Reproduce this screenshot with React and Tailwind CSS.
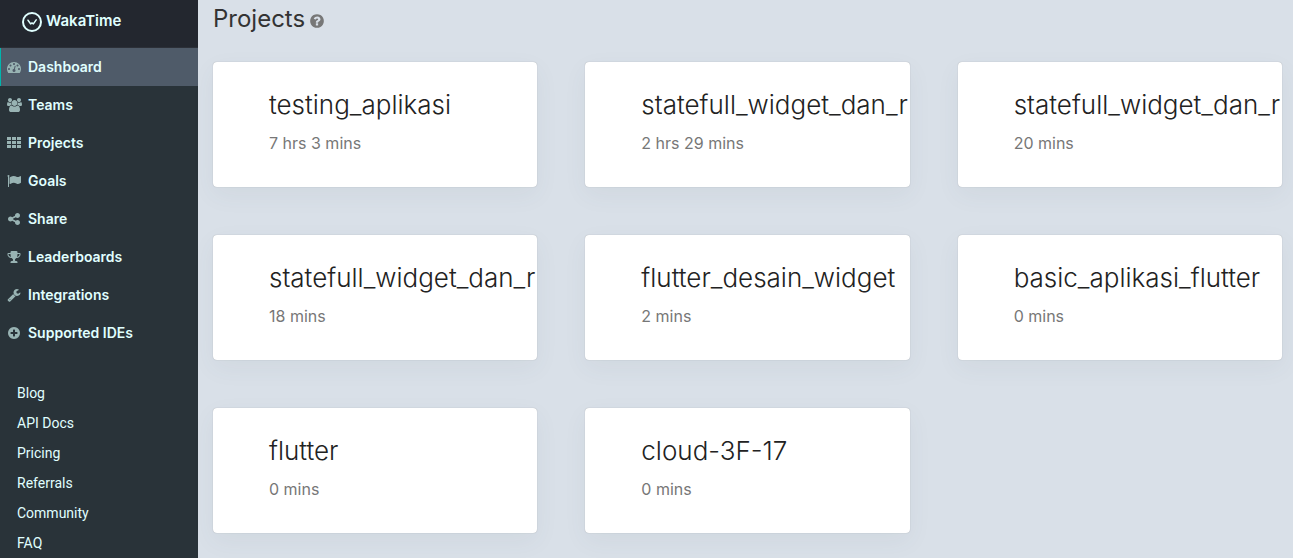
const DISC =
  'm384 192q0 209-103 385.5t-279.5 279.5-385.5 103-385.5-103-279.5-279.5-103-385.5 103-385.5 279.5-279.5 385.5-103 385.5 103 279.5 279.5 103 385.5z';

const PATHS = {
  dashboard:
    'M384 1152q0-53-37.5-90.5t-90.5-37.5-90.5 37.5-37.5 90.5 37.5 90.5 90.5 37.5 90.5-37.5 37.5-90.5zm192-448q0-53-37.5-90.5t-90.5-37.5-90.5 37.5-37.5 90.5 37.5 90.5 90.5 37.5 90.5-37.5 37.5-90.5zm428 481l101-382q6-26-7.5-48.5t-38.5-29.5-48 6.5-30 39.5l-101 382q-60 5-107 43.5t-63 98.5q-20 77 20 146t117 89 146-20 89-117q16-60-6-117t-72-91zm660-33q0-53-37.5-90.5t-90.5-37.5-90.5 37.5-37.5 90.5 37.5 90.5 90.5 37.5 90.5-37.5 37.5-90.5zm-640-640q0-53-37.5-90.5t-90.5-37.5-90.5 37.5-37.5 90.5 37.5 90.5 90.5 37.5 90.5-37.5 37.5-90.5zm448 192q0-53-37.5-90.5t-90.5-37.5-90.5 37.5-37.5 90.5 37.5 90.5 90.5 37.5 90.5-37.5 37.5-90.5zm320 448q0 261-141 483-19 29-54 29h-1402q-35 0-54-29-141-221-141-483 0-182 71-348t191-286 286-191 348-71 348 71 286 191 191 286 71 348z',
  teams:
    'M529 896q-162 5-265 128h-134q-82 0-138-40.5t-56-118.5q0-353 124-353 6 0 43.5 21t97.5 42.5 119 21.5q67 0 133-23-5 37-5 66 0 143 81 256zm1071 637q0 120-73 189.5t-194 69.5h-874q-121 0-194-69.5t-73-189.5q0-53 3.5-103.5t14-109 26.5-108.5 43-97.5 62-81 85.5-53.5 111.5-20q10 0 43 21.5t73 48 107 48 135 21.5 135-21.5 107-48 73-48 43-21.5q61 0 111.5 20t85.5 53.5 62 81 43 97.5 26.5 108.5 14 109 3.5 103.5zm-1024-1277q0 106-75 181t-181 75-181-75-75-181 75-181 181-75 181 75 75 181zm704 384q0 159-112.5 271.5t-271.5 112.5-271.5-112.5-112.5-271.5 112.5-271.5 271.5-112.5 271.5 112.5 112.5 271.5zm576 225q0 78-56 118.5t-138 40.5h-134q-103-123-265-128 81-117 81-256 0-29-5-66 66 23 133 23 59 0 119-21.5t97.5-42.5 43.5-21q124 0 124 353zm-128-609q0 106-75 181t-181 75-181-75-75-181 75-181 181-75 181 75 75 181z',
  projects:
    'M0 128h512v384h-512zM640 128h512v384h-512zM1280 128h512v384h-512zM0 640h512v384h-512zM640 640h512v384h-512zM1280 640h512v384h-512zM0 1152h512v384h-512zM640 1152h512v384h-512zM1280 1152h512v384h-512z',
  goals:
    'M320 256q0 72-64 110v1266q0 13-9.5 22.5t-22.5 9.5h-64q-13 0-22.5-9.5t-9.5-22.5v-1266q-64-38-64-110 0-53 37.5-90.5t90.5-37.5 90.5 37.5 37.5 90.5zm1472 64v763q0 25-12.5 38.5t-39.5 27.5q-215 116-369 116-61 0-123.5-22t-108.5-48-115.5-48-142.5-22q-192 0-464 146-17 9-33 9-26 0-45-19t-19-45v-742q0-32 31-55 21-14 79-43 236-120 421-120 107 0 200 29t219 88q38 19 88 19 54 0 117.5-21t110-47 88-47 54.5-21q26 0 45 19t19 45z',
  share:
    'M1344 1024q133 0 226.5 93.5t93.5 226.5-93.5 226.5-226.5 93.5-226.5-93.5-93.5-226.5q0-12 2-34l-360-180q-92 86-218 86-133 0-226.5-93.5t-93.5-226.5 93.5-226.5 226.5-93.5q126 0 218 86l360-180q-2-22-2-34 0-133 93.5-226.5t226.5-93.5 226.5 93.5 93.5 226.5-93.5 226.5-226.5 93.5q-126 0-218-86l-360 180q2 22 2 34t-2 34l360 180q92-86 218-86z',
  leaderboards:
    'M522 883q-74-162-74-371h-256v96q0 78 94.5 162t235.5 113zm1078-275v-96h-256q0 209-74 371 141-29 235.5-113t94.5-162zm128-128v128q0 71-41.5 143t-112 130-173 97.5-215.5 44.5q-42 54-95 95-38 34-52.5 72.5t-14.5 89.5q0 54 30.5 91t97.5 37q75 0 133.5 45.5t58.5 114.5v64q0 14-9 23t-23 9h-832q-14 0-23-9t-9-23v-64q0-69 58.5-114.5t133.5-45.5q67 0 97.5-37t30.5-91q0-51-14.5-89.5t-52.5-72.5q-53-41-95-95-113-5-215.5-44.5t-173-97.5-112-130-41.5-143v-128q0-40 28-68t68-28h288v-96q0-66 47-113t113-47h576q66 0 113 47t47 113v96h288q40 0 68 28t28 68z',
  integrations:
    'M448 1472q0-26-19-45t-45-19-45 19-19 45 19 45 45 19 45-19 19-45zm644-420l-682 682q-37 37-90 37-52 0-91-37l-106-108q-38-36-38-90 0-53 38-91l681-681q39 98 114.5 173.5t173.5 114.5zm634-435q0 39-23 106-47 134-164.5 217.5t-258.5 83.5q-185 0-316.5-131.5t-131.5-316.5 131.5-316.5 316.5-131.5q58 0 121.5 16.5t107.5 46.5q16 11 16 28t-16 28l-293 169v224l193 107q5-3 79-48.5t135.5-81 70.5-35.5q15 0 23.5 10t8.5 25z',
  ides:
    'M1344 960v-128q0-26-19-45t-45-19h-256v-256q0-26-19-45t-45-19h-128q-26 0-45 19t-19 45v256h-256q-26 0-45 19t-19 45v128q0 26 19 45t45 19h256v256q0 26 19 45t45 19h128q26 0 45-19t19-45v-256h256q26 0 45-19t19-45zm320-64q0 209-103 385.5t-279.5 279.5-385.5 103-385.5-103-279.5-279.5-103-385.5 103-385.5 279.5-279.5 385.5-103 385.5 103 279.5 279.5 103 385.5z',
  help:
    'M1024 1376v-192q0-14-9-23t-23-9h-192q-14 0-23 9t-9 23v192q0 14 9 23t23 9h192q14 0 23-9t9-23zm256-672q0-88-55.5-163t-138.5-116-170-41q-243 0-371 213-15 24 8 42l132 100q7 6 19 6 16 0 25-12 53-68 86-92 34-24 86-24 48 0 85.5 26t37.5 59q0 38-20 61t-68 45q-63 28-115.5 86.5t-52.5 125.5v36q0 14 9 23t23 9h192q14 0 23-9t9-23q0-19 21.5-49.5t54.5-49.5q32-18 49-28.5t46-35 44.5-48 28-60.5 12.5-81z' +
    DISC,
};

const NAV = [
  ['dashboard', 'Dashboard'],
  ['teams', 'Teams'],
  ['projects', 'Projects'],
  ['goals', 'Goals'],
  ['share', 'Share'],
  ['leaderboards', 'Leaderboards'],
  ['integrations', 'Integrations'],
  ['ides', 'Supported IDEs'],
];

const LINKS = ['Blog', 'API Docs', 'Pricing', 'Referrals', 'Community', 'FAQ'];

const PROJECTS = [
  ['testing_aplikasi', '7 hrs 3 mins'],
  ['statefull_widget_dan_r', '2 hrs 29 mins'],
  ['statefull_widget_dan_r', '20 mins'],
  ['statefull_widget_dan_r', '18 mins'],
  ['flutter_desain_widget', '2 mins'],
  ['basic_aplikasi_flutter', '0 mins'],
  ['flutter', '0 mins'],
  ['cloud-3F-17', '0 mins'],
];

function Icon({ name, className }) {
  return (
    <svg
      viewBox={name === 'teams' ? '-64 0 1920 1792' : '0 0 1792 1792'}
      fill="currentColor"
      aria-hidden="true"
      className={className}
    >
      <path d={PATHS[name]} />
    </svg>
  );
}

function Sidebar() {
  return (
    <aside className="w-[198px] shrink-0 bg-[#293339] text-[#e0ffff]">
      <a href="#" className="flex h-12 items-center gap-1 border-b border-[#2c3038] bg-[#23272f] pb-1 pl-[22px] font-semibold">
        <svg viewBox="0 0 20 20" fill="none" stroke="currentColor" aria-hidden="true" className="size-5">
          <circle cx="10" cy="10" r="9" strokeWidth="2" />
          <path d="M6 8.2 8.6 11.9 10 11 11.4 11.9 14.2 7.8" strokeWidth="1.5" strokeLinecap="round" strokeLinejoin="round" />
        </svg>
        <span className="text-[15px]">WakaTime</span>
      </a>
      <nav>
        {NAV.map(([icon, label], i) => (
          <a
            key={icon}
            href="#"
            className={
              i === 0
                ? 'flex h-[38px] items-center gap-1.5 border-l border-[#00b5ad] bg-[#4f5b69] pl-[5px] text-sm font-semibold'
                : 'flex h-[38px] items-center gap-1.5 border-l border-transparent pl-[5px] text-sm font-semibold'
            }
          >
            <span className="flex w-4 justify-center text-[#98b3b3]">
              <Icon name={icon} className={icon === 'teams' ? 'h-3.5 w-[15px]' : 'size-3.5'} />
            </span>
            {label}
          </a>
        ))}
      </nav>
      <nav className="mt-[26px] pl-[17px] font-['Roboto',sans-serif]">
        {LINKS.map((label) => (
          <a key={label} href="#" className="flex h-[30px] items-center text-sm">
            {label}
          </a>
        ))}
      </nav>
    </aside>
  );
}

export default function App() {
  return (
    <div className="flex h-screen overflow-hidden bg-[#d9e0e8] font-['Inter','Roboto',sans-serif]">
      <Sidebar />
      <main className="min-w-0 flex-1 pr-[11px] pl-[15px]">
        <div className="flex h-[62px] items-start gap-1 pt-1">
          <h1 className="text-2xl leading-[30px] text-[#333]">Projects</h1>
          <button type="button" aria-label="About projects" className="mt-[9px] text-[#777]">
            <Icon name="help" className="size-4" />
          </button>
        </div>
        <div className="grid grid-cols-3 gap-12">
          {PROJECTS.map(([name, time]) => (
            <a
              key={time + name}
              href="#"
              className="block h-[125px] overflow-hidden rounded bg-white pt-7 pl-14 shadow-[0_0_1px_rgba(0,0,0,0.3),0_8px_24px_rgba(60,80,100,0.06)]"
            >
              <h2 className="text-[26px] leading-[30px] font-light whitespace-nowrap text-[#222]">{name}</h2>
              <p className="mt-[13px] text-base leading-5 text-[#777]">{time}</p>
            </a>
          ))}
        </div>
      </main>
    </div>
  );
}
